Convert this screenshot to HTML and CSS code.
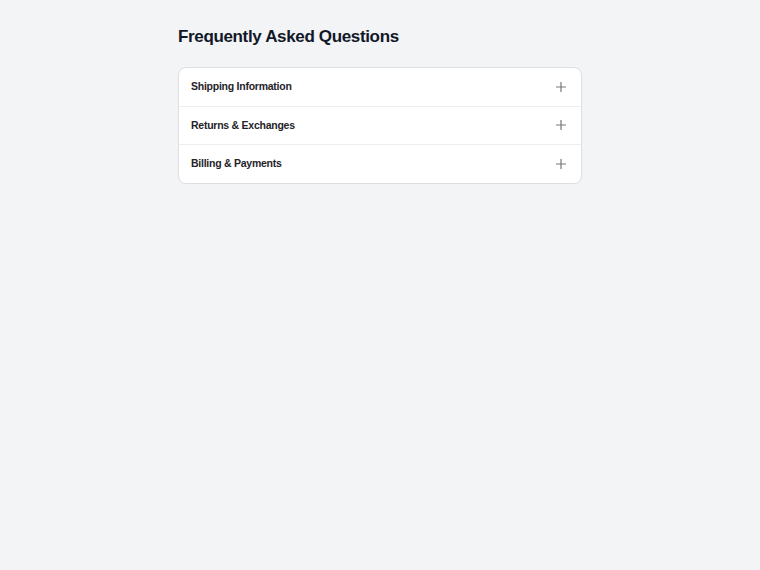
FILE: index.html
```html
<!DOCTYPE html>
<html lang="en">
<head>
    <meta charset="UTF-8">
    <title>FAQ</title>
    <link rel="stylesheet" href="styles.css">
</head>
<body>
    <div class="page">
        <h1 class="title">Frequently Asked Questions</h1>
        <div class="faq">
            <div class="faq-item">
                <span class="faq-label">Shipping Information</span>
                <svg class="faq-icon" viewBox="0 0 10 10"><path d="M5 0v10M0 5h10"/></svg>
            </div>
            <div class="faq-item">
                <span class="faq-label">Returns &amp; Exchanges</span>
                <svg class="faq-icon" viewBox="0 0 10 10"><path d="M5 0v10M0 5h10"/></svg>
            </div>
            <div class="faq-item">
                <span class="faq-label">Billing &amp; Payments</span>
                <svg class="faq-icon" viewBox="0 0 10 10"><path d="M5 0v10M0 5h10"/></svg>
            </div>
        </div>
    </div>
</body>
</html>
```

FILE: styles.css
```css
/*Page*/
body {
    margin: 0;
    padding: 0;
    background-color: #f3f4f6;
    font-family: "Liberation Sans", Arial, sans-serif;
    color: #111827;
}

.page {
    width: 404px;
    margin: 0 auto;
    padding-top: 27px;
}

.title {
    margin: 0 0 20px 0;
    font-size: 17px;
    font-weight: bold;
    line-height: 20px;
    letter-spacing: -0.35px;
}

/*Accordion*/
.faq {
    background-color: #ffffff;
    border: 1px solid #dcdee2;
    border-radius: 8px;
    overflow: hidden;
}

.faq-item {
    display: flex;
    flex-direction: row;
    justify-content: space-between;
    align-items: center;
    height: 37.5px;
    padding: 0 15px 0 12px;
    border-bottom: 1px solid #eceef1;
}

.faq-item:last-child {
    border-bottom: none;
}

.faq-label {
    font-size: 10.5px;
    font-weight: bold;
    letter-spacing: -0.25px;
    color: #1f2329;
    margin-top: -1px;
}

.faq-icon {
    width: 10px;
    height: 10px;
    fill: none;
    stroke: #74787e;
    stroke-width: 1.2;
}
```
